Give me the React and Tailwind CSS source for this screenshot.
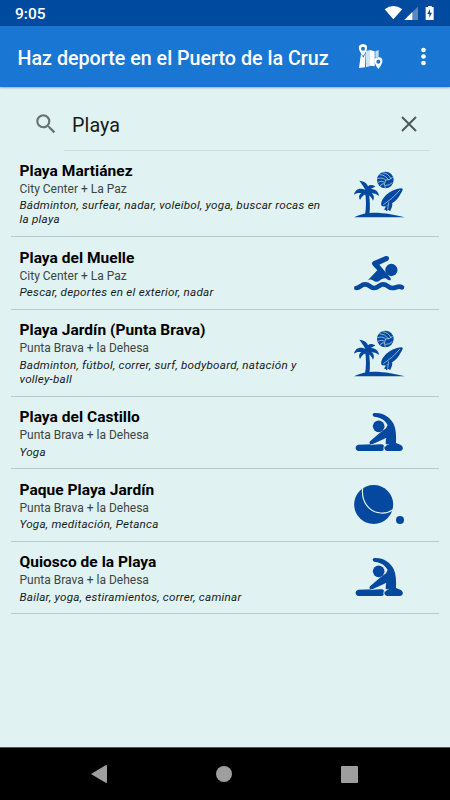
function BeachIcon() {
  return (
    <svg viewBox="0 0 225 195" className="h-[65px] w-[75px] shrink-0 fill-[#04499f]">
      <path d="M42 169C58 160 78 155 101 155C135 155 170 162 194 169Z" />
      <path d="M75 161C79 139 79 117 75 92L86 92C90 117 91 139 88 161Z" />
      <path d="M76 86C70 76 64 66 58 59C73 60 82 68 84 76C89 71 98 71 106 77C100 79 95 82 92 84C105 84 116 91 117 105C109 99 102 97 95 97C102 102 104 110 99 119C95 109 90 103 82 101C74 99 67 104 60 117C55 107 58 100 64 97C56 95 49 96 42 101C45 85 59 79 76 86Z" />
      <circle cx="136" cy="57" r="25" />
      <g className="fill-none stroke-[#e0f2f1] stroke-[1.9]">
        <path d="M137 57Q128 48 112 53M137 57Q130 68 136 82M137 57Q149 58 158 49M118 41Q134 40 146 57M127 35Q146 37 153 54M114 64Q123 58 133 63M121 76Q122 68 132 68M136 73Q149 74 157 65" />
      </g>
      <path d="M124 133C121 114 147 86 184 82C193 82 185 94 180 102C169 121 153 132 133 136C128 137 125 136 124 133Z" />
      <path d="M132 138Q143 135 149 130L156 125C159 133 155 141 150 151C146 146 144 146 140 151C137 146 134 144 130 146Q135 143 137 138Z" />
      <path d="M130 131Q158 114 180 87M143 146L146 124" className="fill-none stroke-[#e0f2f1] stroke-[1.8]" />
    </svg>
  );
}

function SwimIcon() {
  return (
    <svg viewBox="0 0 225 165" className="h-[55px] w-[75px] shrink-0 fill-[#04499f]">
      <circle cx="154" cy="75" r="18.5" />
      <path d="M82 107L112 76L99 62Q92 54 100 49L137 33C147 31 151 42 143 47L118 59L151 98C155 104 151 108 145 105L139 101C133 98 127 101 120 106C111 113 105 111 98 106C93 102 87 103 82 107Z" />
      <path d="M49 129C61 129 63 118 75 118C89 118 91 129 103 129C115 129 118 118 129 118C143 118 145 129 157 129C170 129 173 121 186 127" className="fill-none stroke-[#04499f] stroke-[14]" strokeLinecap="round" />
    </svg>
  );
}

function StretchIcon() {
  return (
    <svg viewBox="0 0 225 165" className="h-[55px] w-[75px] shrink-0 fill-[#04499f]">
      <circle cx="116" cy="64" r="17.5" />
      <path d="M103 24C129 22 151 37 161 57C168 72 169 93 168 114L181 119C192 124 191 137 179 138H141C131 136 133 123 142 120L137 116L138 99L97 118C89 120 86 113 91 108L119 84L138 70L143 60C136 47 124 38 106 36C96 34 96 25 103 24Z" />
      <path d="M55 119L121 117C137 117 138 136 125 138H56C44 137 44 121 55 119Z" />
      <path d="M133 136C127 126 135 118 146 118M92 119L126 116L138 100" className="fill-none stroke-[#e0f2f1] stroke-[2]" />
    </svg>
  );
}

function PetancaIcon() {
  return (
    <svg viewBox="0 0 225 180" className="h-[60px] w-[75px] shrink-0 fill-[#04499f]">
      <circle cx="101" cy="88.5" r="58.5" />
      <path d="M68 39C63 80 87 112 123 114C136 115 149 111 159 104" className="fill-none stroke-[#e0f2f1] stroke-[3.5]" />
      <circle cx="180" cy="135" r="12" />
    </svg>
  );
}

const places = [
  { name: "Playa Martiánez", area: "City Center + La Paz", lines: ["Bádminton, surfear, nadar, voleibol, yoga, buscar rocas en", "la playa"], Icon: BeachIcon, size: "h-[87px]" },
  { name: "Playa del Muelle", area: "City Center + La Paz", lines: ["Pescar, deportes en el exterior, nadar"], Icon: SwimIcon, size: "h-[72.5px]" },
  { name: "Playa Jardín (Punta Brava)", area: "Punta Brava + la Dehesa", lines: ["Badminton, fútbol, correr, surf, bodyboard, natación y", "volley-ball"], Icon: BeachIcon, size: "h-[87px]" },
  { name: "Playa del Castillo", area: "Punta Brava + la Dehesa", lines: ["Yoga"], Icon: StretchIcon, size: "h-[72.5px]" },
  { name: "Paque Playa Jardín", area: "Punta Brava + la Dehesa", lines: ["Yoga, meditación, Petanca"], Icon: PetancaIcon, size: "h-[72.5px]" },
  { name: "Quiosco de la Playa", area: "Punta Brava + la Dehesa", lines: ["Bailar, yoga, estiramientos, correr, caminar"], Icon: StretchIcon, size: "h-[72.5px]" },
];

function StatusBar() {
  return (
    <div className="flex h-[26px] shrink-0 items-center justify-between bg-[#004ba0] pl-[15px] text-white">
      <span className="pt-[3px] text-[15.5px] leading-none font-medium">9:05</span>
      <svg viewBox="0 0 330 78" className="h-[26px] w-[110px] fill-white">
        <path d="M134 28Q160 8 187 28L160 58Z" />
        <path d="M193 60L234 20V60Z" className="opacity-35" />
        <path d="M193 60L217 36V60Z" />
        <path d="M264 18H275V21H281V60H257V21H264Z" />
        <path d="M270 27L262 42H268V53L276 38H270Z" className="fill-[#004ba0]" />
      </svg>
    </div>
  );
}

function AppBar() {
  return (
    <header className="z-10 flex h-[61px] shrink-0 items-center bg-[#1976d2] pl-[17.5px] text-white shadow-[0_1px_2px_rgba(0,0,0,0.3)]">
      <h1 className="w-[322.5px] whitespace-nowrap pt-[5px] text-[19.7px] leading-none font-medium">Haz deporte en el Puerto de la Cruz</h1>
      <svg viewBox="0 78 330 183" className="h-[61px] w-[110px] fill-white">
        <path d="M63 161L70 173L77 159L75 202L57 204Z" />
        <path d="M78 153L90 150V198L78 202Z" className="opacity-80" />
        <path d="M90 150L104 154V199L90 197Z" />
        <path d="M106 154L116 150V170C105 169 100 179 104 187L106 193Z" className="opacity-75" />
        <path fillRule="evenodd" d="M69 132C50 134 55 151 69 168C83 151 88 134 69 132ZM69 140A6 6 0 1 1 69 152A6 6 0 1 1 69 140Z" />
        <path fillRule="evenodd" d="M115 171C97 173 102 190 115 207C129 190 134 173 115 171ZM115 179A6 6 0 1 1 115 191A6 6 0 1 1 115 179Z" />
        <circle cx="250.5" cy="150" r="7" />
        <circle cx="250.5" cy="169.5" r="7" />
        <circle cx="250.5" cy="189" r="7" />
      </svg>
    </header>
  );
}

function SearchField() {
  return (
    <div className="flex h-[63.5px] shrink-0 pr-[20px] pl-[35px]">
      <svg viewBox="0 0 24 24" className="mt-[24px] h-[26px] w-[26px] -translate-x-[2px] fill-[#697371]">
        <path d="M15.5 14h-.79l-.28-.27A6.47 6.47 0 0 0 16 9.5 6.5 6.5 0 1 0 9.5 16c1.61 0 3.09-.59 4.23-1.57l.27.28v.79l5 4.99L20.49 19l-4.99-5zm-6 0C7.01 14 5 11.99 5 9.5S7.01 5 9.5 5 14 7.01 14 9.5 11.99 14 9.5 14z" />
      </svg>
      <div className="ml-[3px] flex flex-1 items-center justify-between border-b border-[#cddedd] pt-[12px] pr-[12.5px] pl-[8px]">
        <span className="pt-[3px] text-[19.7px] leading-none tracking-[0.1px] text-[#171b1a]">Playa</span>
        <svg viewBox="0 0 18 18" className="h-[18px] w-[18px] fill-none stroke-[#505958] stroke-[2]">
          <path d="M2 2L16 16M16 2L2 16" />
        </svg>
      </div>
    </div>
  );
}

function PlaceRow({ name, area, lines, Icon, size }) {
  return (
    <li className={`flex shrink-0 items-center justify-between border-b border-[#b9cac9] pl-[9px] pr-[24px] ${size}`}>
      <div className="flex h-full flex-col whitespace-nowrap pt-[11.5px]">
        <h2 className="-ml-[0.5px] text-[15.5px] leading-[18px] font-bold tracking-[0.03px] text-black">{name}</h2>
        <p className="-ml-[0.5px] mt-[2.3px] text-[12px] leading-[15px] text-[#3d4544]">{area}</p>
        <p className="-ml-[0.5px] mt-[1.7px] text-[11.7px] leading-[14px] tracking-[0.23px] text-[#181b1b] italic">
          {lines.map((line) => (
            <span key={line} className="block">{line}</span>
          ))}
        </p>
      </div>
      <Icon />
    </li>
  );
}

export default function App() {
  return (
    <div className="flex h-[800px] w-[450px] flex-col overflow-hidden bg-[#e0f2f1] font-['Roboto',sans-serif]">
      <StatusBar />
      <AppBar />
      <SearchField />
      <ul className="-mt-[0.5px] flex flex-1 flex-col px-[11px]">
        {places.map((place) => (
          <PlaceRow key={place.name} {...place} />
        ))}
      </ul>
      <nav className="flex h-[53px] shrink-0 items-center justify-between border-t border-[#555] bg-black pr-[92px] pl-[91px]">
        <svg viewBox="0 0 16 18" className="h-[18px] w-[16px] fill-[#9e9e9e]">
          <path d="M0 9L15 0Q16 0 16 1V17Q16 18 15 18Z" />
        </svg>
        <span className="h-[16px] w-[16px] rounded-full bg-[#9e9e9e]" />
        <span className="h-[17px] w-[17px] rounded-[1px] bg-[#9e9e9e]" />
      </nav>
    </div>
  );
}
